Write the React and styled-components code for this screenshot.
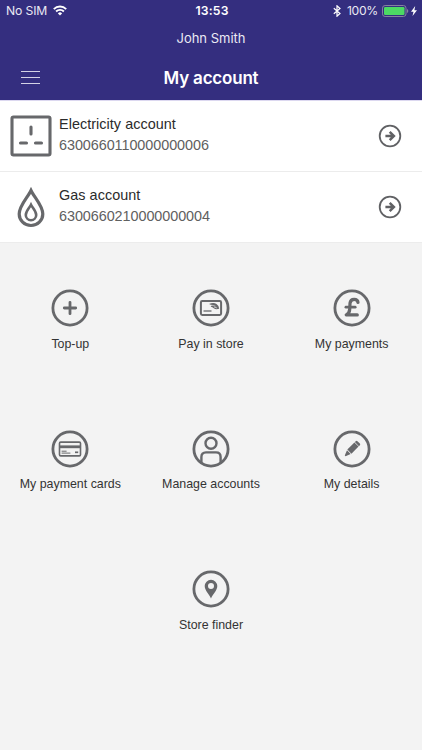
import React from "react";
import styled, { createGlobalStyle } from "styled-components";

const accounts = [
  { name: "Electricity account", number: "6300660110000000006", icon: SocketIcon },
  { name: "Gas account", number: "6300660210000000004", icon: FlameIcon }
];

const actions = [
  { label: "Top-up", icon: PlusIcon },
  { label: "Pay in store", icon: StoreCardIcon },
  { label: "My payments", icon: PoundIcon },
  { label: "My payment cards", icon: CardIcon },
  { label: "Manage accounts", icon: PersonIcon },
  { label: "My details", icon: PencilIcon },
  { label: "Store finder", icon: PinIcon }
];

export default function App() {
  return (
    <>
      <GlobalStyle />
      <Screen>
        <Header>
          <StatusBar>
            <StatusLeft>
              <span>No SIM</span>
              <WifiIcon />
            </StatusLeft>
            <Clock>13:53</Clock>
            <StatusRight>
              <BluetoothIcon />
              <span>100%</span>
              <BatteryIcon />
            </StatusRight>
          </StatusBar>
          <UserName>John Smith</UserName>
          <TitleBar>
            <MenuButton aria-label="Menu">
              <i />
              <i />
              <i />
            </MenuButton>
            <Title>My account</Title>
          </TitleBar>
        </Header>

        {accounts.map(({ name, number, icon: Icon }) => (
          <AccountRow key={number}>
            <Icon />
            <AccountInfo>
              <AccountName>{name}</AccountName>
              <AccountNumber>{number}</AccountNumber>
            </AccountInfo>
            <ArrowIcon />
          </AccountRow>
        ))}

        <Actions>
          {actions.map(({ label, icon: Icon }) => (
            <Action key={label}>
              <svg width="38" height="38" viewBox="-19 -19 38 38" fill="none" stroke="#67686b">
                <circle r="17.1" strokeWidth="2.8" />
                <Icon />
              </svg>
              <ActionLabel>{label}</ActionLabel>
            </Action>
          ))}
        </Actions>
      </Screen>
    </>
  );
}

function WifiIcon() {
  return (
    <svg width="14" height="11" viewBox="0 0 14 11" fill="none" stroke="#fff" strokeWidth="1.9">
      <path d="M.8 4.1a8.8 8.8 0 0 1 12.4 0M3.1 6.5a5.5 5.5 0 0 1 7.8 0" />
      <path d="M4.9 8.4a3 3 0 0 1 4.2 0L7 10.6z" fill="#fff" stroke="none" />
    </svg>
  );
}

function BluetoothIcon() {
  return (
    <svg width="8" height="12" viewBox="0 0 8 12" fill="none" stroke="#fff" strokeWidth="1.2">
      <path d="M.8 3.3 7 8.5 4 11.2V.8L7 3.5.8 8.7" />
    </svg>
  );
}

function BatteryIcon() {
  return (
    <svg width="36" height="12" viewBox="0 0 36 12">
      <rect x=".5" y=".5" width="23.5" height="11" rx="2.6" fill="none" stroke="#85819f" />
      <rect x="2" y="2" width="20.5" height="8" rx="1.2" fill="#4cd964" />
      <path d="M25 4v4q1.3-.5 1.3-2T25 4z" fill="#85819f" />
      <path d="M33.2 1 29 6.7h2.5L30.5 11 35 5.2h-2.6z" fill="#fff" />
    </svg>
  );
}

function SocketIcon() {
  return (
    <svg width="42" height="42" viewBox="0 0 42 42" fill="none" stroke="#67686b" strokeWidth="3.1">
      <rect x="2" y="2" width="38" height="38" rx="1.5" />
      <path d="M21 12v7M10.5 28h6M25.5 28h6" strokeLinecap="round" />
    </svg>
  );
}

function FlameIcon() {
  return (
    <svg width="42" height="42" viewBox="0 0 42 42" fill="none" stroke="#67686b" strokeWidth="3.2">
      <path d="M21 4.5C18 11 9.200 19.500 9.200 28a11.800 11.500 0 0 0 23.600 0C32.800 19.500 24 11 21 4.500z" />
      <path
        d="M21 18.800C19.500 22 15.800 25 15.800 29a5.200 5.200 0 0 0 10.400 0C26.200 25 22.500 22 21 18.800z"
        strokeWidth="2.6"
      />
    </svg>
  );
}

function ArrowIcon() {
  return (
    <svg width="24" height="24" viewBox="-12 -12 24 24" fill="none" stroke="#606164">
      <circle r="10.3" strokeWidth="1.8" />
      <path d="M-4.6 0H3.6M-.3-4.1 3.9 0-.3 4.1" strokeWidth="2.5" />
    </svg>
  );
}

function PlusIcon() {
  return <path d="M-5.7 0H5.7M0-5.7V5.7" strokeWidth="2.8" strokeLinecap="round" />;
}

function StoreCardIcon() {
  return (
    <g>
      <rect x="-10.1" y="-6.9" width="20.2" height="13.8" rx="1.3" strokeWidth="2" />
      <path d="M-7.5 3H.5" strokeWidth="1.3" />
      <path
        d="M-2-3.9Q2.500-6.300 5.500-3.900Q8-2.200 8.200.8Q4.800 1.800 2.800.3Q1.500-.8-.3-1.200L1-2.700z"
        fill="#67686b"
        stroke="none"
      />
      <path d="M.3-2.900 4.500-1.800M3-1 6 0" stroke="#dededf" strokeWidth=".7" />
    </g>
  );
}

function PoundIcon() {
  return (
    <g strokeWidth="3.2" strokeLinecap="round" strokeLinejoin="round">
      <path d="M6-5.5C5.6-9.500-1.300-10.200-2-4.700L-2.300 1.500Q-2.600 5.300-5.800 6.900H5.300" />
      <path d="M-6.1-.8H3.2" strokeWidth="2.700" />
    </g>
  );
}

function CardIcon() {
  return (
    <g>
      <rect x="-10.5" y="-6.9" width="21" height="13.8" rx="1.2" strokeWidth="1.6" />
      <path d="M-10.5-2.2h21" strokeWidth="2.8" />
      <path d="M-8.4 2.2h5M-8.4 4.1H.4" strokeWidth="1" />
      <path d="M5 3.3h3.2" strokeWidth="1.7" />
    </g>
  );
}

function PersonIcon() {
  return (
    <g strokeWidth="2.4">
      <circle cy="-5.7" r="5.5" />
      <path d="M-9.6 14V8Q-9.6 3.4-5 3.4H5Q9.6 3.4 9.6 8v6" />
    </g>
  );
}

function PencilIcon() {
  return (
    <g transform="rotate(45)" fill="#67686b" stroke="none">
      <path d="M-2.9-6.3h5.800v10h-5.800zM-2.900-6.900v-1.300q0-1.200 1.200-1.200h3.400q1.200 0 1.200 1.200v1.300z" />
      <path d="M-2.600 4.500h5.200L.5 9.700h-1z" />
    </g>
  );
}

function PinIcon() {
  return (
    <path
      d="M0 9.4C-1.5 5.7-6.3 1.6-6.3-2.9a6.3 6.3 0 0 1 12.6 0C6.3 1.6 1.5 5.7 0 9.4zM3-2.9a3 3 0 1 0-6 0a3 3 0 1 0 6 0z"
      fill="#67686b"
      fillRule="evenodd"
      stroke="none"
    />
  );
}

const GlobalStyle = createGlobalStyle`
  * {
    box-sizing: border-box;
  }

  body {
    margin: 0;
    background: #f3f3f3;
  }

  svg {
    display: block;
    flex: none;
  }
`;

const Screen = styled.div`
  width: 422px;
  height: 750px;
  overflow: hidden;
  background: #f3f3f3;
  font-family: "Liberation Sans", Arial, sans-serif;
`;

const Header = styled.header`
  height: 101px;
  background: #342e7f;
  border-bottom: 1px solid #dcd8f0;
  color: #fff;
  font-family: Inter, sans-serif;
`;

const StatusBar = styled.div`
  display: grid;
  grid-template-columns: 1fr auto 1fr;
  align-items: center;
  height: 21px;
  padding: 0 4px 0 6px;
  font-size: 12.2px;
`;

const StatusLeft = styled.div`
  display: flex;
  align-items: center;
  gap: 6px;
  color: #e9e8f3;

  span {
    letter-spacing: -0.15px;
  }
`;

const StatusRight = styled.div`
  display: flex;
  align-items: center;
  justify-content: flex-end;
  gap: 4px;
  color: #e9e8f3;

  span {
    margin-left: 2px;
    letter-spacing: -0.3px;
  }
`;

const Clock = styled.div`
  font-weight: 600;
  letter-spacing: 0.2px;
`;

const UserName = styled.div`
  height: 34px;
  line-height: 35px;
  text-align: center;
  font-size: 13px;
  color: #eae9f4;
`;

const TitleBar = styled.div`
  display: grid;
  grid-template-columns: 60px 1fr 60px;
  align-items: center;
  height: 45px;
`;

const MenuButton = styled.button`
  display: flex;
  flex-direction: column;
  gap: 5px;
  width: 19px;
  margin-left: 21px;
  padding: 0;
  border: 0;
  background: none;

  i {
    height: 1px;
    background: #d4d2e5;
  }
`;

const Title = styled.h1`
  margin: 0;
  text-align: center;
  font-size: 17px;
  font-weight: 600;
  letter-spacing: -0.2px;
`;

const AccountRow = styled.div`
  display: flex;
  align-items: center;
  height: 71px;
  padding: 0 20px 0 10px;
  background: #fff;
  border-bottom: 1px solid #ececec;

  > :last-child {
    margin-right: 0;
  }
`;

const AccountInfo = styled.div`
  flex: 1;
  padding: 0 0 4px 7px;
  white-space: nowrap;
`;

const AccountName = styled.div`
  line-height: 22px;
  font-size: 14.4px;
  letter-spacing: 0.05px;
  color: #2b2b2b;
`;

const AccountNumber = styled.div`
  line-height: 21px;
  font-size: 14.4px;
  letter-spacing: -0.06px;
  color: #606060;
`;

const Actions = styled.div`
  display: grid;
  grid-template-columns: repeat(3, 1fr);
  grid-auto-rows: 140.7px;
  padding-top: 46px;

  > :last-child {
    grid-column: 2;
  }
`;

const Action = styled.div`
  display: flex;
  flex-direction: column;
  align-items: center;
`;

const ActionLabel = styled.div`
  margin-top: 8.6px;
  line-height: 16px;
  font-size: 12.4px;
  white-space: nowrap;
  color: #333;
`;
